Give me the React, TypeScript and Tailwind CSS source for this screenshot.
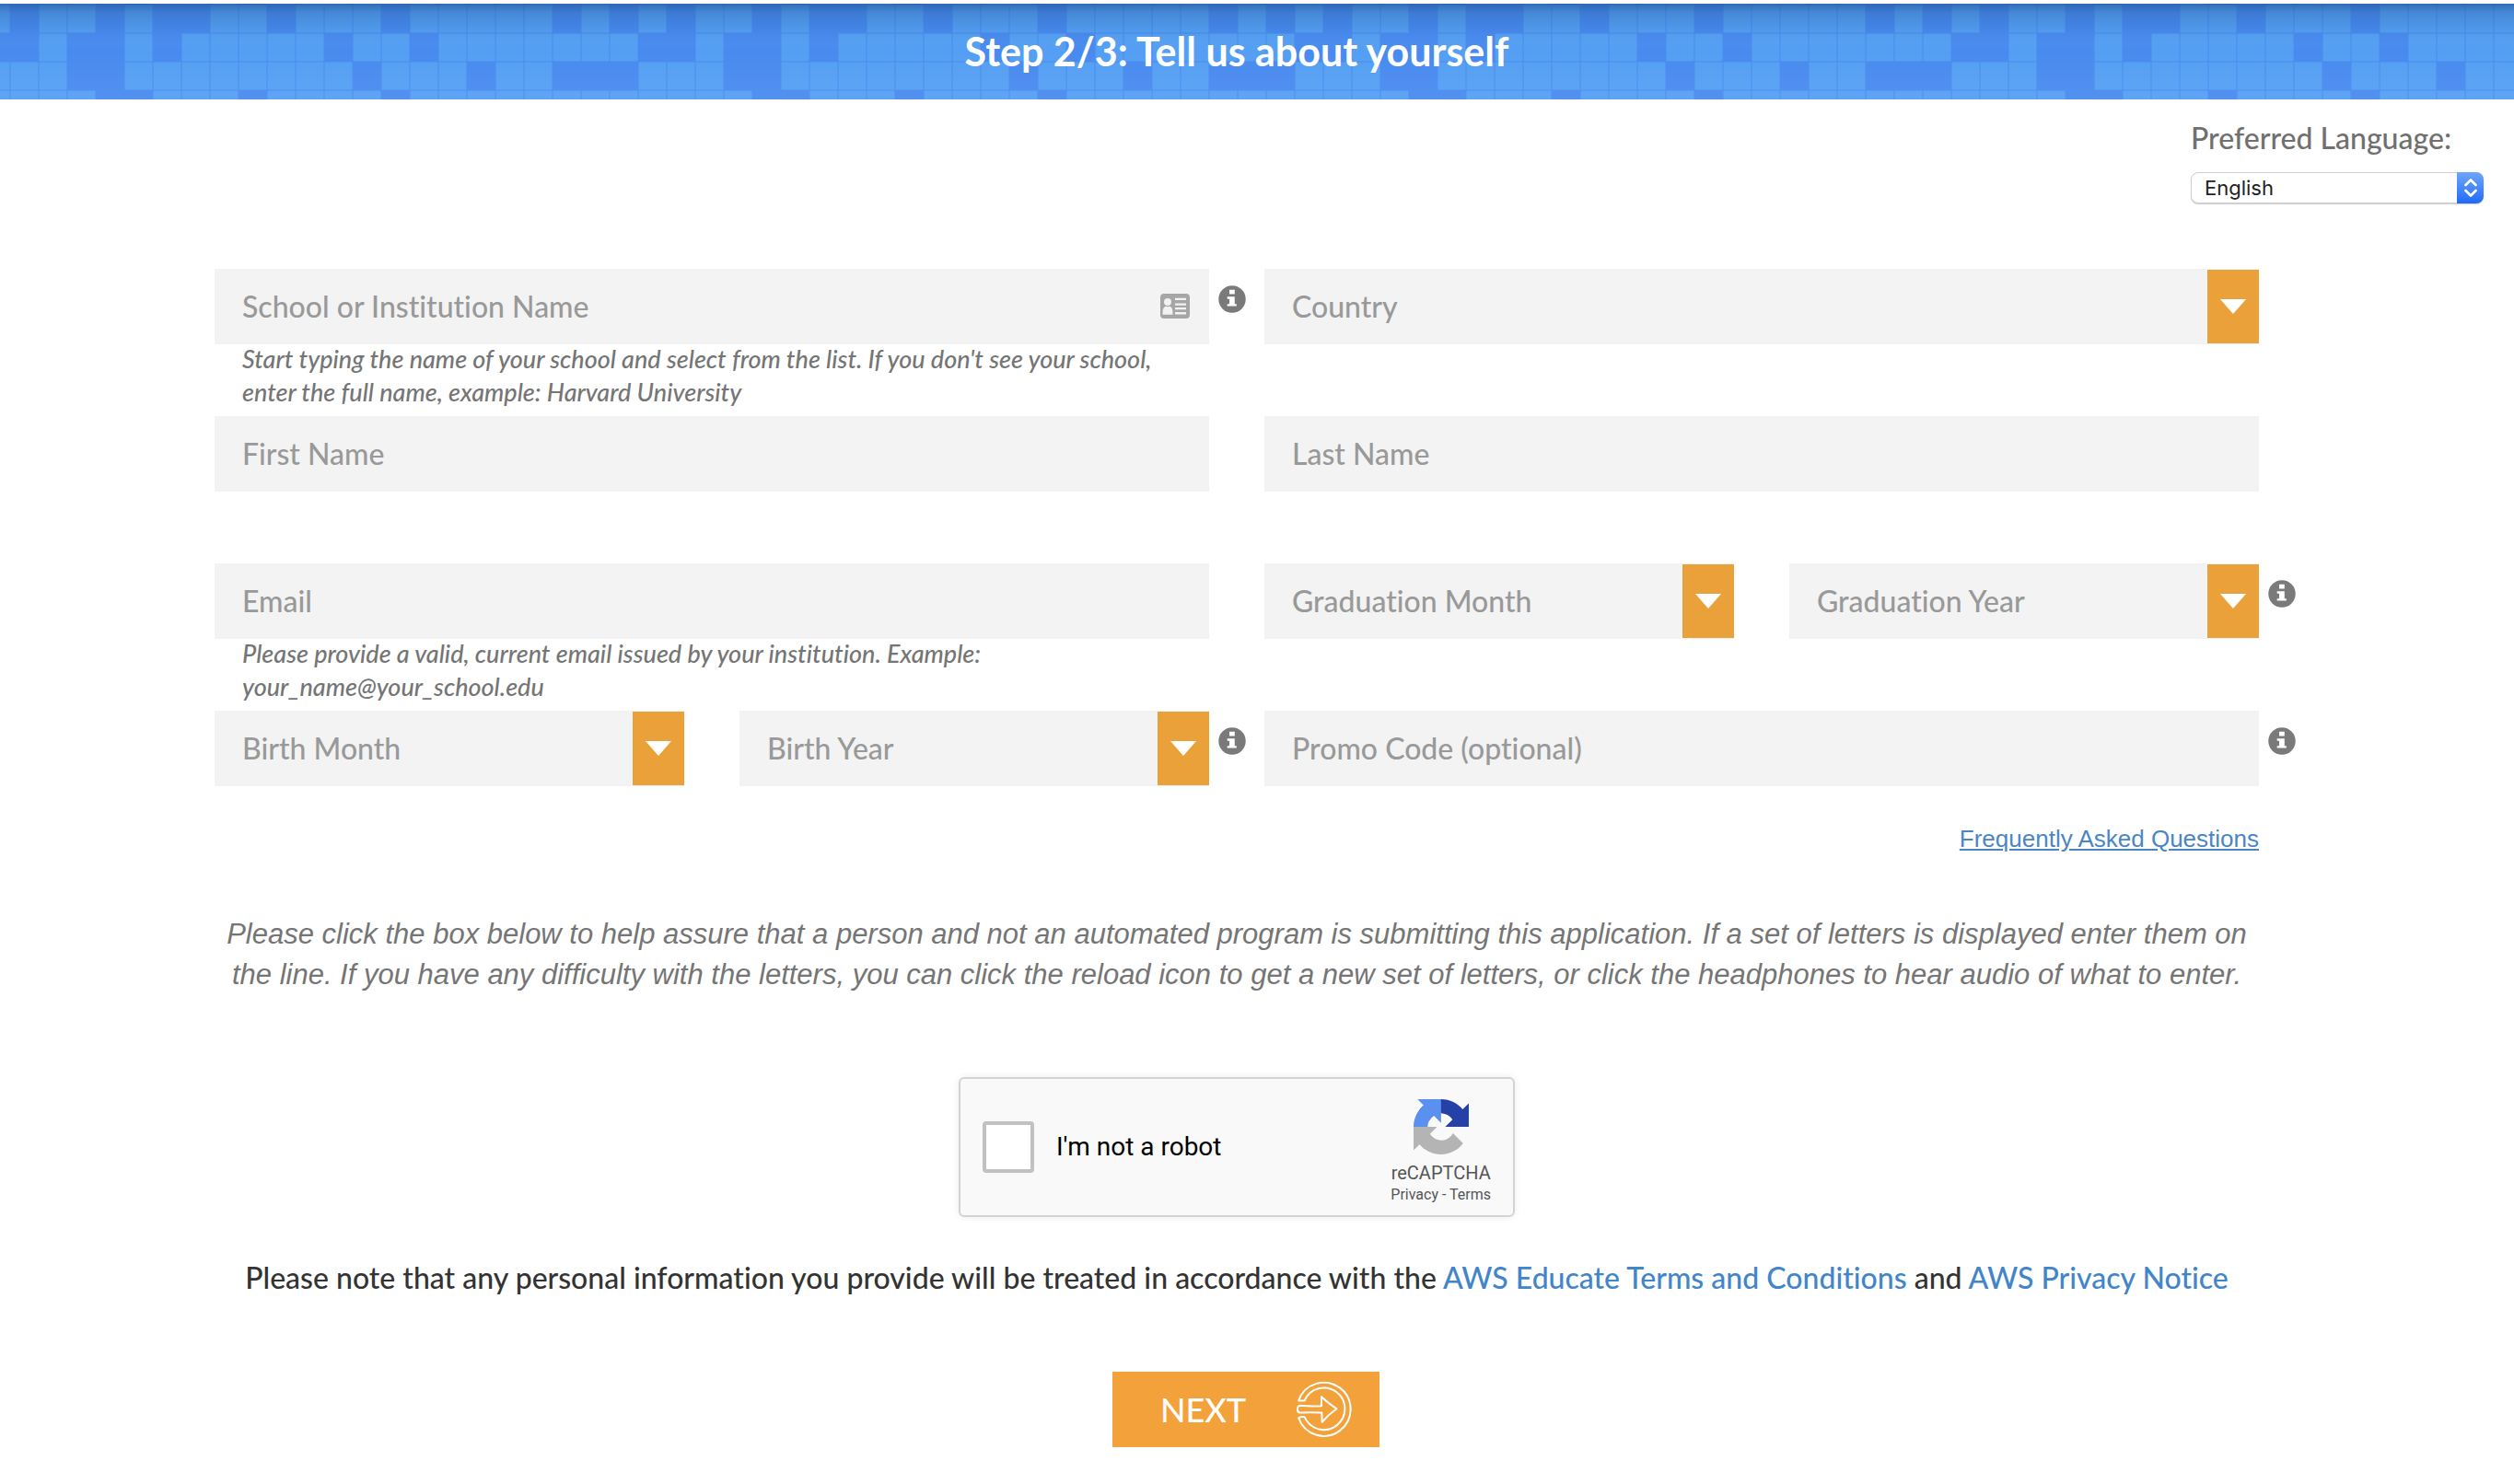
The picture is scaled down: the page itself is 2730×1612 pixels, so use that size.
import type { ReactNode } from "react";

const CELL = 31;
const COLUMNS = 23;
const DARK_CELLS = [
  [1, 4, 6, 7, 10, 14, 20, 22],
  [0, 1, 3, 4, 6, 12, 15],
  [3, 4, 13, 17, 20, 21, 22],
  [4, 5, 9, 14],
];

function Mosaic() {
  return (
    <svg className="absolute inset-0 h-full w-full" aria-hidden="true">
      <defs>
        <pattern id="mosaic" x="-20" y="1" width={CELL * COLUMNS} height={CELL * 4} patternUnits="userSpaceOnUse">
          <rect width={CELL * COLUMNS} height={CELL * 4} fill="#488aef" />
          {DARK_CELLS.map((dark, row) =>
            Array.from({ length: COLUMNS }, (_, col) =>
              dark.includes(col) ? null : (
                <rect key={`${row}-${col}`} x={col * CELL + 0.5} y={row * CELL + 0.5} width={CELL - 1} height={CELL - 1} fill="#549ff3" />
              ),
            ),
          )}
        </pattern>
        <linearGradient id="shade" x1="0" y1="0" x2="0" y2="1">
          <stop offset="0" stopColor="#1d4f8c" stopOpacity="0.6" />
          <stop offset="0.1" stopColor="#1d4f8c" stopOpacity="0.26" />
          <stop offset="0.3" stopColor="#1d4f8c" stopOpacity="0.06" />
          <stop offset="0.5" stopColor="#ffffff" stopOpacity="0" />
          <stop offset="1" stopColor="#ffffff" stopOpacity="0.06" />
        </linearGradient>
      </defs>
      <rect width="100%" height="100%" fill="url(#mosaic)" />
      <rect width="100%" height="100%" fill="url(#shade)" />
    </svg>
  );
}

function InfoButton({ label }: { label: string }) {
  return (
    <button type="button" aria-label={label} className="absolute top-[18px] left-full ml-[10px] size-[30px]">
      <svg viewBox="0 0 30 30" className="size-full">
        <circle cx="15" cy="15" r="14.7" fill="#7a7a7a" />
        <path fill="#fff" d="M12 4.7h5.8v4.8H12zM9.7 12.3h8.1v7.9h2v2.4H9.7v-2.4H12v-5.5H9.7z" />
      </svg>
    </button>
  );
}

function CardIcon() {
  return (
    <svg viewBox="0 0 32 27" className="pointer-events-none absolute top-[27px] right-[21px] h-[27px] w-8" aria-hidden="true">
      <rect width="32" height="27" rx="4" fill="#a6a6a6" />
      <circle cx="8" cy="9" r="4" fill="#f2f2f2" />
      <path fill="#f2f2f2" d="M2.5 22.7c0-5 .5-8.4 3.7-8.9a5 5 0 0 0 3.6 0c3.2.5 3.7 3.9 3.7 8.9zM16 4.7h12V7H16zM16 10.5h12v2.2H16zM16 15h12v2.3H16zM16 20h12v2.5H16z" />
    </svg>
  );
}

type FieldProps = { id: string; label: string; info?: string; help?: string; icon?: ReactNode };

function TextField({ id, label, info, help, icon }: FieldProps) {
  return (
    <div>
      <div className="relative">
        <input
          id={id}
          placeholder={label}
          aria-label={label}
          aria-describedby={help ? `${id}-help` : undefined}
          className="block h-[82px] w-full bg-[#f3f3f3] px-[30px] pb-0.5 text-[32px] font-medium text-[#555] placeholder:text-[#999]"
        />
        {icon}
        {info && <InfoButton label={info} />}
      </div>
      {help && (
        <p id={`${id}-help`} className="-mt-0.5 px-[30px] text-[27px] leading-9 font-medium text-[#757575] italic">{help}</p>
      )}
    </div>
  );
}

function SelectField({ id, label, info }: FieldProps) {
  return (
    <div>
      <div className="relative h-[82px]">
        <select id={id} aria-label={label} className="block h-full w-full appearance-none bg-[#f3f3f3] pr-16 pl-[30px] text-[32px] font-medium text-[#999]">
          <option>{label}</option>
        </select>
        <span className="pointer-events-none absolute inset-y-px right-0 flex w-14 items-center justify-center bg-[#eba13a]">
          <svg viewBox="0 0 28 16" className="h-4 w-7" aria-hidden="true">
            <path d="M0 0h28L14 16z" fill="#fff" />
          </svg>
        </span>
        {info && <InfoButton label={info} />}
      </div>
    </div>
  );
}

function Captcha() {
  return (
    <div className="mx-auto mt-[89px] flex h-[152px] w-[604px] items-center justify-between rounded-md border-2 border-[#d3d3d3] bg-[#f9f9f9] pr-6 pl-6 shadow-[0_0_8px_rgba(0,0,0,0.08)]">
      <label className="flex items-center gap-6 font-[Roboto,sans-serif] text-[28px] text-black">
        <input type="checkbox" className="size-14 appearance-none rounded-sm border-4 border-[#c1c1c1] bg-white" />
        I'm not a robot
      </label>
      <div className="flex flex-col items-center pt-3 font-[Roboto,sans-serif] text-[#555]">
        <svg viewBox="0 0 64 64" className="size-[60px]" aria-hidden="true">
          <path fill="#2540a6" d="M64 31.955l-.033-1.37V4.687l-7.16 7.16C50.948 4.674 42.033.093 32.05.093c-10.4 0-19.622 4.96-25.458 12.64l11.736 11.86a15.55 15.55 0 0 1 4.754-5.334c2.05-1.6 4.952-2.906 8.968-2.906.485 0 .86.057 1.135.163 4.976.393 9.288 3.14 11.828 7.124l-8.307 8.307L64 31.953" />
          <path fill="#5a90f0" d="M31.862.094l-1.37.033H4.594l7.16 7.16C4.58 13.147 0 22.06 0 32.046c0 10.4 4.96 19.622 12.64 25.458L24.5 45.768a15.55 15.55 0 0 1-5.334-4.754c-1.6-2.05-2.906-4.952-2.906-8.968 0-.485.057-.86.163-1.135.393-4.976 3.14-9.288 7.124-11.828l8.307 8.307L31.86.095" />
          <path fill="#b4b4b4" d="M.001 32.045l.033 1.37v25.898l7.16-7.16c5.86 7.173 14.774 11.754 24.76 11.754 10.4 0 19.622-4.96 25.458-12.64l-11.736-11.86a15.55 15.55 0 0 1-4.754 5.334c-2.05 1.6-4.952 2.906-8.968 2.906-.485 0-.86-.057-1.135-.163-4.976-.393-9.288-3.14-11.828-7.124l8.307-8.307c-10.522.04-22.4.066-27.295-.005" />
        </svg>
        <span className="mt-2 text-[20px] leading-6">reCAPTCHA</span>
        <span className="text-[16px] leading-6">
          <a href="#privacy">Privacy</a> - <a href="#terms">Terms</a>
        </span>
      </div>
    </div>
  );
}

function EnterIcon() {
  return (
    <svg viewBox="0 0 60 60" className="size-[60px]" fill="none" stroke="#fff" strokeWidth="2" strokeLinejoin="round" aria-hidden="true">
      <path d="M2.2 20.4A29 29 0 1 1 2.2 39.2Q5 37.6 8.6 38.2A22.8 22.8 0 1 0 8.6 20.4Z" />
      <path d="M4 25.8Q1 26 1 30Q1 33.6 4 33.6Q14 32.8 27.4 33.6L27.6 43.8Q34 36 43.4 29.2Q34 23 27 16.2V26.2Q16 26.8 4 25.8Z" />
    </svg>
  );
}

export default function App() {
  return (
    <div className="bg-white font-[Lato,sans-serif] [font-variant-ligatures:no-common-ligatures]">
      <header className="relative mt-1 flex h-[104px] items-center justify-center pr-11">
        <Mosaic />
        <h1 className="relative text-[43px] leading-[48px] font-bold text-white">Step 2/3: Tell us about yourself</h1>
      </header>

      <div className="ml-auto flex w-[351px] flex-col pt-[22px] pr-[33px]">
        <label htmlFor="language" className="text-[32px] leading-10 font-medium text-[#707070]">Preferred Language:</label>
        <div className="relative mt-[17px] h-[34px]">
          <select id="language" className="block h-full w-full appearance-none rounded-lg border border-[#cfcfcf] bg-white px-[14px] font-[Inter,sans-serif] text-[22px] leading-8 text-[#222] shadow-[0_1px_1px_rgba(0,0,0,0.2)]">
            <option>English</option>
          </select>
          <span className="pointer-events-none absolute inset-y-0 right-0 flex w-[29px] items-center justify-center rounded-r-lg bg-linear-to-b from-[#6fa5f8] to-[#1f69f8]">
            <svg viewBox="0 0 14 20" className="h-5 w-[14px]" fill="none" stroke="#fff" strokeWidth="2.6" strokeLinecap="round" strokeLinejoin="round" aria-hidden="true">
              <path d="M1.5 7L7 1.5L12.5 7M1.5 13L7 18.5L12.5 13" />
            </svg>
          </span>
        </div>
      </div>

      <form className="pt-[71px] pr-[277px] pl-[233px]" onSubmit={(event) => event.preventDefault()}>
        <div className="grid grid-cols-2 gap-x-[60px] gap-y-1.5 [&>*]:min-h-[154px]">
          <TextField
            id="school"
            label="School or Institution Name"
            info="About school name"
            icon={<CardIcon />}
            help="Start typing the name of your school and select from the list. If you don't see your school, enter the full name, example: Harvard University"
          />
          <SelectField id="country" label="Country" />
          <TextField id="first-name" label="First Name" />
          <TextField id="last-name" label="Last Name" />
          <TextField
            id="email"
            label="Email"
            help="Please provide a valid, current email issued by your institution. Example: your_name@your_school.edu"
          />
          <div className="grid grid-cols-2 gap-x-[60px]">
            <SelectField id="graduation-month" label="Graduation Month" />
            <SelectField id="graduation-year" label="Graduation Year" info="About graduation date" />
          </div>
        </div>
        <div className="mt-1.5 grid grid-cols-2 gap-x-[60px]">
          <div className="grid grid-cols-2 gap-x-[60px]">
            <SelectField id="birth-month" label="Birth Month" />
            <SelectField id="birth-year" label="Birth Year" info="About birth date" />
          </div>
          <TextField id="promo-code" label="Promo Code (optional)" info="About promo codes" />
        </div>

        <p className="mt-[39px] text-right font-['Liberation_Sans',sans-serif] text-[26px] leading-9">
          <a href="#faq" className="text-[#4a86c5] underline">Frequently Asked Questions</a>
        </p>

        <p className="mt-16 text-center font-['Liberation_Sans',sans-serif] text-[31px] leading-[44px] text-[#757575] italic">
          Please click the box below to help assure that a person and not an automated program is submitting this application. If a set of letters is displayed enter them on the line. If you have any difficulty with the letters, you can click the reload icon to get a new set of letters, or click the headphones to hear audio of what to enter.
        </p>

        <Captcha />

        <p className="mt-11 text-center text-[32px] leading-[44px] font-medium text-[#333]">
          Please note that any personal information you provide will be treated in accordance with the{" "}
          <a href="#terms-and-conditions" className="text-[#4285c9]">AWS Educate Terms and Conditions</a> and{" "}
          <a href="#privacy-notice" className="text-[#4285c9]">AWS Privacy Notice</a>
        </p>

        <div className="mt-20 mb-10 flex justify-center pl-5">
          <button type="submit" className="flex h-[82px] w-[290px] items-center justify-between bg-[#f3a13a] pr-[30px] pl-[52px] text-[36px] font-medium text-white">
            NEXT
            <EnterIcon />
          </button>
        </div>
      </form>
    </div>
  );
}
